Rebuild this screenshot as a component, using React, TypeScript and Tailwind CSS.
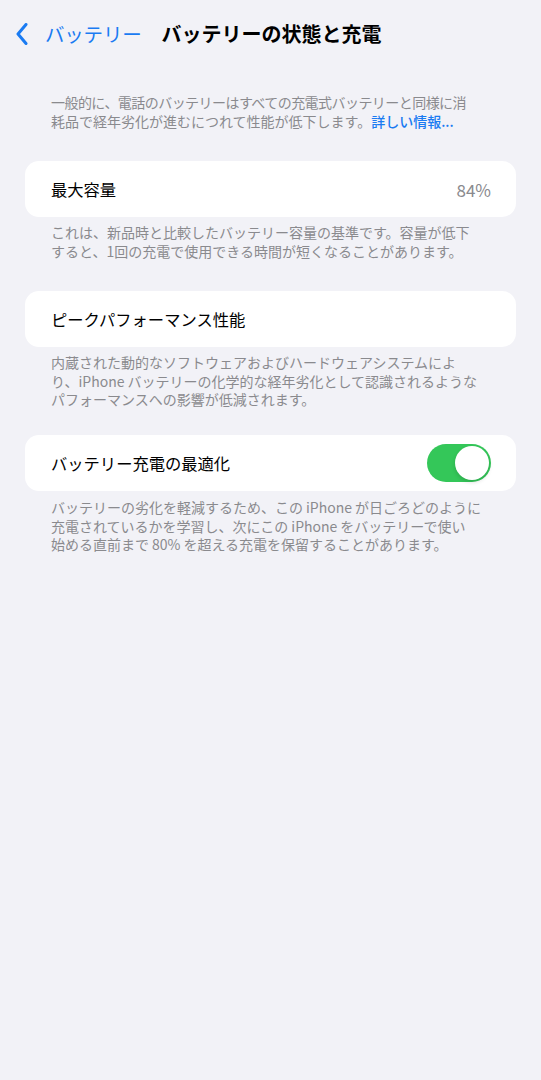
import React from "react";

const font = '"Noto Sans CJK JP", "Noto Sans", "Liberation Sans", sans-serif';

function Caption({ children, className = "" }: { children: React.ReactNode; className?: string }) {
  return (
    <p
      className={`px-[51px] text-[14px] leading-[18.7px] text-[#8a8a8e] ${className}`}
    >
      {children}
    </p>
  );
}

function Gap() {
  return <span className="inline-block w-[3px]" />;
}

function Card({ children, className = "" }: { children: React.ReactNode; className?: string }) {
  return (
    <div
      className={`mx-[25px] h-[56px] rounded-[14px] bg-white flex items-center justify-between pl-[26px] pr-[25px] ${className}`}
    >
      {children}
    </div>
  );
}

export default function App() {
  return (
    <div className="min-h-[1080px] w-full bg-[#f2f2f7]" style={{ fontFamily: font }}>
      <div className="h-[68px] flex items-center pl-[16px]">
        <svg width="12" height="22" viewBox="0 0 12 22" className="mr-[17px]">
          <path
            d="M10 1.5 L2 11 L10 20.5"
            fill="none"
            stroke="#1a7bf2"
            strokeWidth="3"
            strokeLinecap="round"
            strokeLinejoin="round"
          />
        </svg>
        <span className="text-[19.5px] text-[#1a7bf2] tracking-[-0.2px]">バッテリー</span>
        <span className="ml-[20px] text-[20px] font-bold text-black">
          バッテリーの状態と充電
        </span>
      </div>

      <Caption className="mt-[25px]">
        <span className="tracking-[-0.55px]">一般的に、電話のバッテリーはすべての充電式バッテリーと同様に消</span>
        <br />
        <span>耗品で経年劣化が進むにつれて性能が低下します。</span>
        <span className="text-[#1a7bf2] font-medium">詳しい情報...</span>
      </Caption>

      <Card className="mt-[31px]">
        <span className="text-[16.3px] text-black">最大容量</span>
        <span className="text-[17px] text-[#8a8a8e]">84%</span>
      </Card>
      <Caption className="mt-[6px]">
        これは、新品時と比較したバッテリー容量の基準です。容量が低下
        <br />
        すると、1回の充電で使用できる時間が短くなることがあります。
      </Caption>

      <Card className="mt-[30px]">
        <span className="text-[16.3px] text-black">ピークパフォーマンス性能</span>
      </Card>
      <Caption className="mt-[6px]">
        内蔵された動的なソフトウェアおよびハードウェアシステムによ
        <br />
        り、iPhone<Gap />バッテリーの化学的な経年劣化として認識されるような
        <br />
        パフォーマンスへの影響が低減されます。
      </Caption>

      <Card className="mt-[26px]">
        <span className="text-[16.3px] text-black">バッテリー充電の最適化</span>
        <div className="w-[64px] h-[38px] rounded-full bg-[#34c759] flex items-center justify-end px-[2px]">
          <div className="w-[34px] h-[34px] rounded-full bg-white shadow-[0_2px_4px_rgba(0,0,0,0.15)]" />
        </div>
      </Card>
      <Caption className="mt-[7px]">
        バッテリーの劣化を軽減するため、この<Gap />iPhone<Gap />が日ごろどのように
        <br />
        充電されているかを学習し、次にこの<Gap />iPhone<Gap />をバッテリーで使い
        <br />
        始める直前まで<Gap />80%<Gap />を超える充電を保留することがあります。
      </Caption>
    </div>
  );
}
